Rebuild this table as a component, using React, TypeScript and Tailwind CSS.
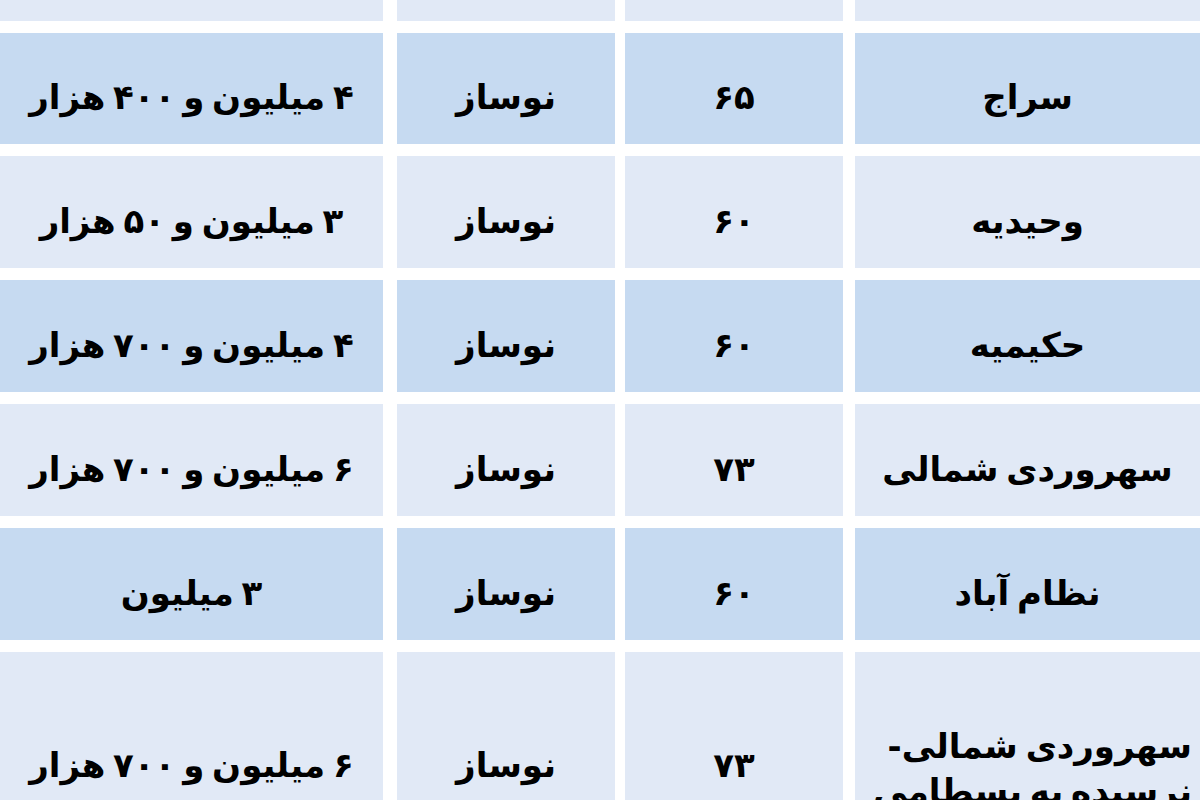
const rows = [
  { area: "سراج", size: "۶۵", status: "نوساز", price: "۴ میلیون و ۴۰۰ هزار", blue: true },
  { area: "وحیدیه", size: "۶۰", status: "نوساز", price: "۳ میلیون و ۵۰ هزار", blue: false },
  { area: "حکیمیه", size: "۶۰", status: "نوساز", price: "۴ میلیون و ۷۰۰ هزار", blue: true },
  { area: "سهروردی شمالی", size: "۷۳", status: "نوساز", price: "۶ میلیون و ۷۰۰ هزار", blue: false },
  { area: "نظام آباد", size: "۶۰", status: "نوساز", price: "۳ میلیون", blue: true },
];

function Row({
  cells,
  blue,
  height,
  pad = "pt-[18px]",
}: {
  cells: React.ReactNode[];
  blue: boolean;
  height: string;
  pad?: string;
}) {
  const bg = blue ? "bg-[#c6daf1]" : "bg-[#e1e9f6]";
  const cell = `shrink-0 flex items-center justify-center ${pad}`;
  return (
    <div dir="rtl" className={`flex shrink-0 ${height}`}>
      <div className={`w-[345px] ${cell} ${bg}`}>{cells[0]}</div>
      <div className={`w-[218px] mr-3 ${cell} ${bg}`}>{cells[1]}</div>
      <div className={`w-[218px] mr-[10px] ${cell} ${bg}`}>{cells[2]}</div>
      <div className={`w-[383px] mr-[14px] ${cell} ${bg}`}>{cells[3]}</div>
    </div>
  );
}

export default function App() {
  return (
    <div
      className="w-[1200px] h-[800px] overflow-hidden bg-white flex flex-col gap-3 text-black font-bold text-[34px] leading-[45px] [word-spacing:-4px]"
      style={{ fontFamily: '"DejaVu Sans", sans-serif' }}
    >
      {/* top row, mostly scrolled out of view */}
      <Row cells={[null, null, null, null]} blue={false} height="h-[21px]" pad="pt-0" />
      {rows.map((r, i) => (
        <Row
          key={i}
          blue={r.blue}
          height={i === 0 ? "h-[111px]" : "h-[112px]"}
          cells={[<span>{r.area}</span>, <span>{r.size}</span>, <span>{r.status}</span>, <span>{r.price}</span>]}
        />
      ))}
      <Row
        blue={false}
        height="h-[226px]"
        pad="pt-0"
        cells={[
          <span className="block w-full pr-[8px] pt-[8px] text-right">
            سهروردی شمالی-
            <br />
            نرسیده به بسطامی
          </span>,
          <span>۷۳</span>,
          <span>نوساز</span>,
          <span>۶ میلیون و ۷۰۰ هزار</span>,
        ]}
      />
    </div>
  );
}
